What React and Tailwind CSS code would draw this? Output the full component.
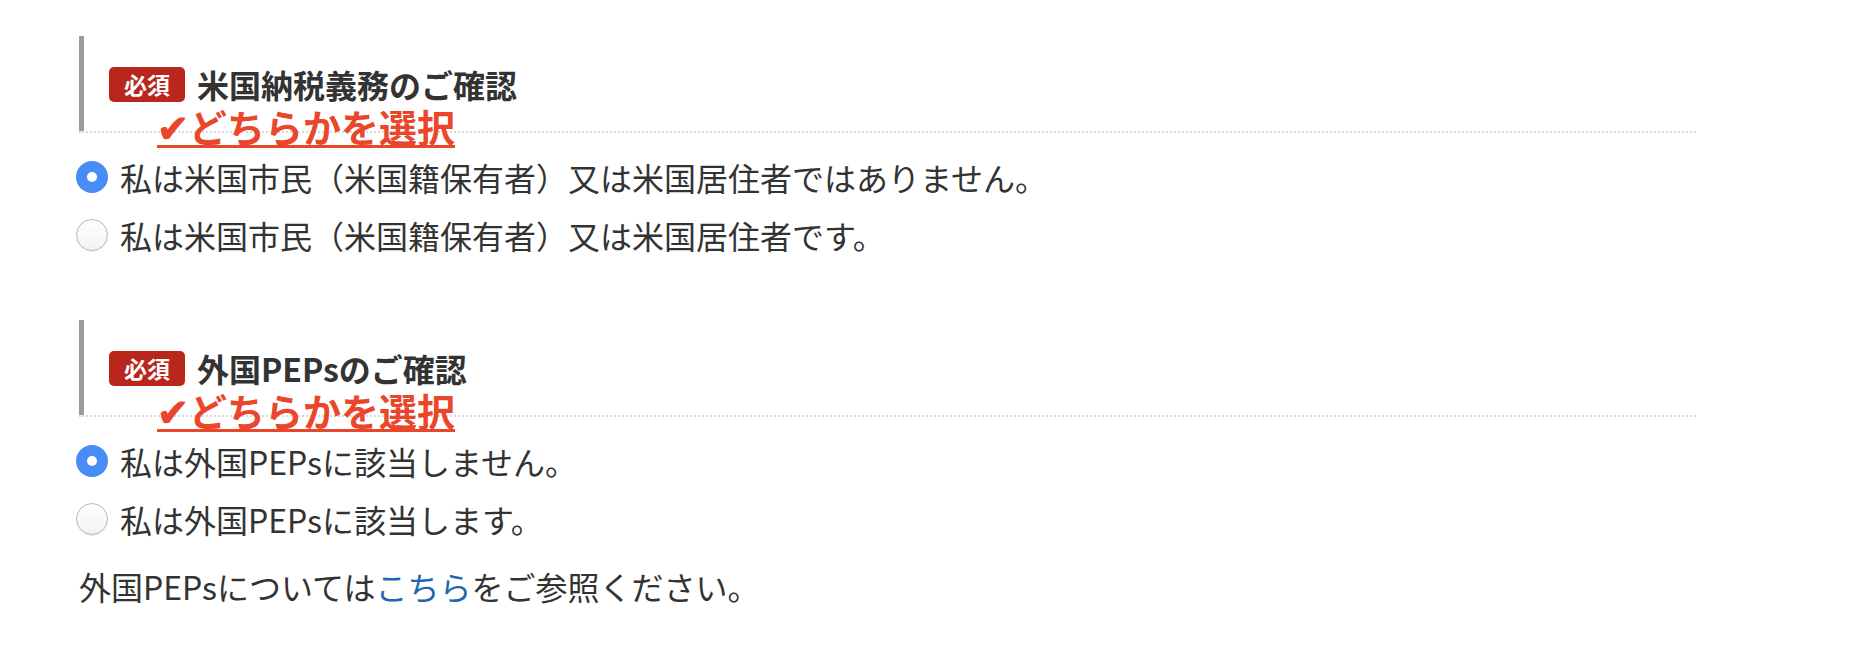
import React, { useState } from 'react';

const FONT = { fontFamily: '"Noto Sans CJK JP", "Noto Sans", sans-serif' };

const Radio = ({ checked, label, onClick }) => (
  <label onClick={onClick} className="flex items-center h-[58px] cursor-pointer">
    {checked ? (
      <span className="w-8 h-8 rounded-full bg-[#4a8cf6] flex items-center justify-center shrink-0">
        <span className="w-[10px] h-[10px] rounded-full bg-white"></span>
      </span>
    ) : (
      <span className="w-8 h-8 rounded-full border border-[#b8b8b8] bg-gradient-to-b from-white to-[#f2f2f2] shadow-[0_1px_1px_rgba(0,0,0,0.08)] shrink-0"></span>
    )}
    <span className="ml-3 text-[32px] leading-[48px] text-[#333]">{label}</span>
  </label>
);

const Section = ({ title, options, value, onChange }) => (
  <div>
    <div className="h-[97px] border-b-2 border-dotted border-[#d9d9d9]">
      <div className="h-full border-l-[5px] border-solid border-[#9c9c9c] pl-[25px] pt-[31px]">
        <div className="flex items-center">
          <span className="h-[35px] px-[15px] rounded-[5px] bg-[#b9261c] text-white text-[23px] font-bold leading-[35px]">
            必須
          </span>
          <span className="ml-3 text-[32px] font-bold text-[#333] leading-[35px]">{title}</span>
        </div>
        <div className="flex pl-[48px] mt-[4px]">
          <span className="h-[42px] leading-[40px] border-b-[3px] border-solid border-[#e9462c] text-[#e9462c] text-[38px] font-bold whitespace-nowrap">
            ✔どちらかを選択
          </span>
        </div>
      </div>
    </div>
    <div className="mt-[15px] -ml-[3px]">
      {options.map((opt, i) => (
        <Radio key={i} checked={value === i} label={opt} onClick={() => onChange(i)} />
      ))}
    </div>
  </div>
);

export default function App() {
  const [usTax, setUsTax] = useState(0);
  const [peps, setPeps] = useState(0);

  return (
    <div className="bg-white min-h-[646px] w-[1860px]" style={FONT}>
      <div className="pl-[79px] pt-[36px] w-[1696px]">
        <Section
          title="米国納税義務のご確認"
          options={[
            '私は米国市民（米国籍保有者）又は米国居住者ではありません。',
            '私は米国市民（米国籍保有者）又は米国居住者です。',
          ]}
          value={usTax}
          onChange={setUsTax}
        />
        <div className="mt-[56px]">
          <Section
            title="外国PEPsのご確認"
            options={['私は外国PEPsに該当しません。', '私は外国PEPsに該当します。']}
            value={peps}
            onChange={setPeps}
          />
        </div>
        <p className="mt-[14px] text-[32px] leading-[48px] text-[#333]">
          外国PEPsについては<a href="#" className="text-[#2266b3]">こちら</a>をご参照ください。
        </p>
      </div>
    </div>
  );
}
